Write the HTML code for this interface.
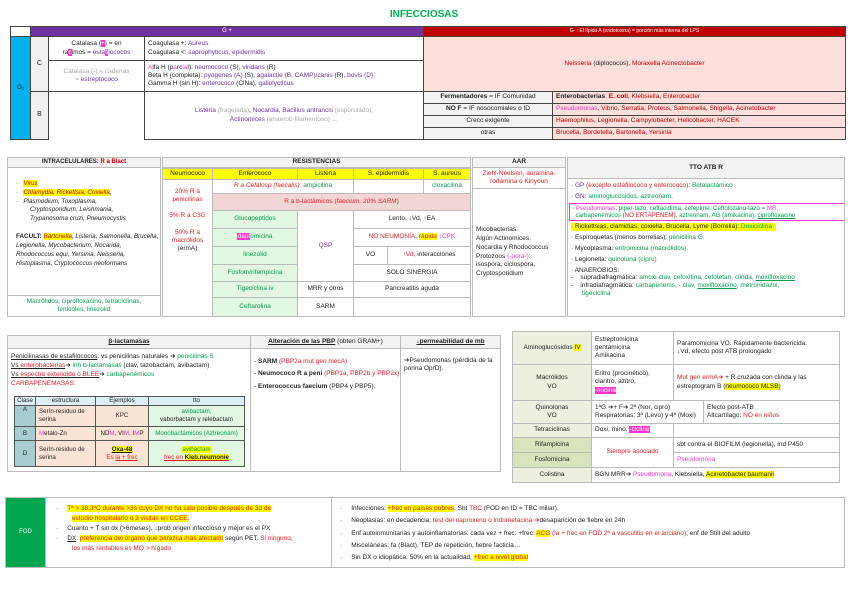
<!DOCTYPE html>
<html><head><meta charset="utf-8">
<style>
*{margin:0;padding:0;box-sizing:border-box}
body{width:848px;height:599px;background:#fff;position:relative;overflow:hidden;font-family:"Liberation Sans",sans-serif;font-size:6.5px;color:#222;line-height:1.25}
.c{position:absolute;border:1px solid #555;display:flex;align-items:center;justify-content:center;text-align:center;overflow:hidden}
.g{border-color:#bbb}
.l{justify-content:flex-start;text-align:left;padding-left:3px}
.t{align-items:flex-start;padding-top:3px}
.pu{color:#7030a0}.lg{color:#aaa}.r{color:#c00000}.rd{color:#e02020}.gr{color:#00a050}.mg{color:#ff33cc}
.hm{background:#ff33cc;color:#fff}.hy{background:#ffff00}
b{font-weight:bold}
u{text-decoration:underline}
</style></head><body>
<div style="position:absolute;left:0;width:848px;top:9px;text-align:center;color:#00b050;font-weight:bold;font-size:10px">INFECCIOSAS</div>

<!-- top table -->
<div class="c" style="left:10px;top:26px;width:21px;height:11px;border-color:#444"></div>
<div class="c" style="left:30px;top:26px;width:394px;height:11px;background:#7030a0;color:#fff;border-color:#444;font-size:6px">G +</div>
<div class="c" style="left:423px;top:26px;width:423px;height:11px;background:#c00000;color:#fff;border-color:#444;font-size:5px">G- : El lípido A (endotoxina) = porción más interna del LPS</div>
<div class="c" style="left:10px;top:36px;width:21px;height:104px;background:#00b0f0;border-color:#444">O₂</div>
<div class="c" style="left:30px;top:36px;width:19px;height:56px;background:#f0f0f0;border-color:#444;font-size:7px">C</div>
<div class="c" style="left:30px;top:91px;width:19px;height:49px;background:#f0f0f0;border-color:#444;font-size:7px">B</div>
<div class="c" style="left:48px;top:36px;width:97px;height:25px;border-color:#444"><div>Catalasa (<span class="hm">+</span>) = en<br>ra<span class="hm">c</span>imos = <span class="pu">esta<span class="hm">fi</span>lococos</span></div></div>
<div class="c" style="left:48px;top:60px;width:97px;height:32px;border-color:#444"><div class="lg">Catalasa (-) = cadenas<br>= <span class="pu">estreptococo</span></div></div>
<div class="c l" style="left:144px;top:36px;width:280px;height:25px;border-color:#444"><div>Coagulasa +: <span class="pu">Aureus</span><br>Coagulasa &lt;: <span class="pu">saprophyticus, epidermidis</span></div></div>
<div class="c l" style="left:144px;top:60px;width:280px;height:32px;border-color:#444"><div><span class="mg">A</span>lfa H (p<span class="mg">a</span>rc<span class="mg">ia</span>l): <span class="pu">neumococo</span> (S), <span class="pu">viridans</span> (R)<br>Beta H (completa): <span class="pu">pyogenes (A)</span> (S), <span class="pu">agalactie (B, CAMP)/canis</span> (R), <span class="pu">bovis (D)</span><br>Gamma H (sin H): <span class="pu">enterococo</span> (ClNa), <span class="pu">gallolycticus</span></div></div>
<div class="c" style="left:144px;top:91px;width:280px;height:49px;border-color:#444"><div><span class="pu">Listeria</span> <span class="lg">(fragelada)</span>, <span class="pu">Nocardia, Bacillus antrancis</span> <span class="lg">(esporulado),</span><br><span class="pu">Actinomices</span> <span class="lg">(anaerob filamentoso) …</span></div></div>
<div class="c" style="left:423px;top:36px;width:423px;height:56px;background:#fde0dc;border-color:#444"><span class="r">Neisseria <span style="color:#222">(diplococos)</span>, Moraxella Acinectobacter</span></div>
<div class="c" style="left:423px;top:91px;width:130px;height:13px;background:#f2f2f2;border-color:#444"><span><b>Fermentadores</b> = IF Comunidad</span></div>
<div class="c" style="left:423px;top:103px;width:130px;height:13px;background:#f2f2f2;border-color:#444"><span><b>NO F</b> = IF nosocomiales o ID</span></div>
<div class="c" style="left:423px;top:115px;width:130px;height:13px;background:#f2f2f2;border-color:#444">Crecc exigente</div>
<div class="c" style="left:423px;top:127px;width:130px;height:13px;background:#f2f2f2;border-color:#444">otras</div>
<div class="c l" style="left:552px;top:91px;width:294px;height:13px;background:#fde0dc;border-color:#444"><span><b>Enterobacterias</b>: <b class="r">E. coli</b>, <span class="r">Klebsiella, Enterobacter</span></span></div>
<div class="c l" style="left:552px;top:103px;width:294px;height:13px;background:#fde0dc;border-color:#444"><span class="r"><span class="mg">Pseudomonas</span>, Vibrio, Serratia, Proteus, Salmonella, Shigella, Acinetobacter</span></div>
<div class="c l" style="left:552px;top:115px;width:294px;height:13px;background:#fde0dc;border-color:#444"><span class="r">Haemophilus, Legionella, Campylobacter, Helicobacter, HACEK</span></div>
<div class="c l" style="left:552px;top:127px;width:294px;height:13px;background:#fde0dc;border-color:#444"><span class="r">Brucella, Bordetella, Bartonella, Yersinia</span></div>

<!-- intracelulares -->
<div class="c g" style="left:7px;top:157px;width:154px;height:11px;background:#f2f2f2;font-size:6px"><b>INTRACELULARES: <span class="r">R a Blact</span></b></div>
<div class="c g l t" style="left:7px;top:167px;width:154px;height:129px;font-style:italic;font-size:6.3px;padding-top:12px;padding-left:8px;line-height:1.4"><div>
<div>· &nbsp;&nbsp;<span class="hy r">Virus</span></div>
<div>· &nbsp;&nbsp;<span class="hy r">Chlamydia, Rickettsia, Coxiella</span>,</div>
<div>· &nbsp;&nbsp;Plasmodium, Toxoplasma,</div>
<div style="padding-left:14px">Cryptosporidium, Leishmania,<br>Trypanosoma cruzi, Pneumocystis</div>
<div style="margin-top:9px"><b style="font-style:normal">FACULT:</b> <span class="hy r">Bartonella</span>, Listeria, Salmonella, Brucella, Legionella, Mycobacterium, Nocarida, Rhodococcus equi, Yersinia, Neisseria, Histoplasma, Cryptococcus neoformans</div></div></div>
<div class="c g gr" style="left:7px;top:295px;width:154px;height:22px"><div>Macrólidos, ciprofloxacino, tetraciclinas,<br>fenicoles, linezolid</div></div>

<!-- resistencias -->
<div class="c g" style="left:162px;top:157px;width:309px;height:11px;background:#f2f2f2"><b>RESISTENCIAS</b></div>
<div class="c g hy" style="left:162px;top:168px;width:51px;height:12px">Neumococo</div>
<div class="c g hy" style="left:212px;top:168px;width:86px;height:12px">Enterococo</div>
<div class="c g hy" style="left:297px;top:168px;width:57px;height:12px">Listeria</div>
<div class="c g hy" style="left:353px;top:168px;width:71px;height:12px">S. epidermidis</div>
<div class="c g hy" style="left:423px;top:168px;width:48px;height:12px">S. aureus</div>
<div class="c g t" style="left:162px;top:179px;width:51px;height:138px;padding-top:8px"><div><span class="rd">20% R a penicilinas</span><br><br><span class="rd">5% R a C3G</span><br><br><span class="rd">50% R a macrólidos</span><br>(ermA)</div></div>
<div class="c g" style="left:212px;top:179px;width:142px;height:15px"><span><i class="rd">R a Cefalosp (faecalis):</i> <span class="gr">ampicilina</span></span></div>
<div class="c g" style="left:353px;top:179px;width:71px;height:15px"></div>
<div class="c g gr" style="left:423px;top:179px;width:48px;height:15px">cloxacilina</div>
<div class="c g" style="left:212px;top:193px;width:259px;height:18px;background:#f2d6d6"><span class="rd">R a b-lactámicos (<i>faecium, 20% SARM</i>)</span></div>
<div class="c g gr" style="left:212px;top:210px;width:86px;height:19px;background:#e2f7e2">Glucopeptidos</div>
<div class="c g gr" style="left:212px;top:228px;width:86px;height:19px;background:#e2f7e2"><span><span class="hm">dapt</span>omicina</span></div>
<div class="c g gr" style="left:212px;top:246px;width:86px;height:19px;background:#e2f7e2">linezolid</div>
<div class="c g gr" style="left:212px;top:264px;width:86px;height:18px;background:#e2f7e2">Fosfom/rifampicina</div>
<div class="c g gr" style="left:212px;top:281px;width:86px;height:17px;background:#e2f7e2">Tigeciclina iv</div>
<div class="c g gr" style="left:212px;top:297px;width:86px;height:20px;background:#e2f7e2">Ceftarolina</div>
<div class="c g pu" style="left:297px;top:210px;width:57px;height:72px">QSP</div>
<div class="c g" style="left:297px;top:281px;width:57px;height:17px">MRR y otros</div>
<div class="c g" style="left:297px;top:297px;width:57px;height:20px">SARM</div>
<div class="c g" style="left:353px;top:210px;width:118px;height:19px">Lento, ↓Vd, ↑EA</div>
<div class="c g" style="left:353px;top:228px;width:118px;height:19px"><span><span class="rd">NO NEUMONÍA,</span> <span class="hy rd">rápida</span> <span class="mg">↑CPK</span></span></div>
<div class="c g" style="left:353px;top:246px;width:35px;height:19px">VO</div>
<div class="c g" style="left:387px;top:246px;width:84px;height:19px"><span><span class="rd">↑Vd,</span> interacciones</span></div>
<div class="c g" style="left:353px;top:264px;width:118px;height:18px">SOLO SINERGIA</div>
<div class="c g" style="left:353px;top:281px;width:118px;height:17px">Pancreatitis aguda</div>
<div class="c g" style="left:353px;top:297px;width:118px;height:20px"></div>

<!-- AAR -->
<div class="c g" style="left:472px;top:157px;width:94px;height:11px;background:#f2f2f2"><b>AAR</b></div>
<div class="c g rd" style="left:472px;top:167px;width:94px;height:22px"><div>Ziehl-Neelsen, auramina-<br>rodamina o Kinyoun</div></div>
<div class="c g l" style="left:472px;top:188px;width:94px;height:129px"><div style="line-height:1.35">Micobacterias:<br>Algún Actinomices,<br>Nocardia y Rhodococcus<br>Protozoos <span class="mg">(-pora-)</span>:<br>isospora, ciclospora,<br>Cryptosporidium</div></div>

<!-- TTO -->
<div class="c g" style="left:567px;top:157px;width:278px;height:22px;background:#f2f2f2"><b>TTO ATB R</b></div>
<div class="c g l t" style="left:567px;top:178px;width:278px;height:139px;padding-top:3px;line-height:1.2"><div style="width:100%">
<div style="margin-bottom:3px">· <span class="pu">GP</span> <span class="rd">(excepto estafilococo y enterococo)</span>: <span class="gr">Betalactámico</span></div>
<div style="margin-bottom:2px">· <span class="pu">GN</span>: <span class="gr">aminoglucósidos, aztreonam.</span></div>
<div style="border:1px solid #ff33cc;margin:0 0 2px -2px;padding:1px 2px;width:276px;white-space:nowrap;font-size:6.2px">· <span class="mg">Pseudomonas</span>: <span class="gr">piper-tazo, ceftacidima, cefepime, Ceftolozano-tazo =</span> <span class="mg">MR,</span><br>&nbsp;&nbsp;<span class="gr">carbapenémicos</span> <span class="rd">(NO ERTAPENEM)</span>, <span class="gr">aztreonam, AG (amikacina), <u>ciprofloxacino</u></span></div>
<div style="margin-bottom:3px"><span class="hy" style="white-space:nowrap;display:inline-block;padding-right:4px">· Rickettsias, clamidias, coxiella, Brucella, Lyme (Borrelia): <span class="gr">Doxiciclina</span></span></div>
<div style="margin-bottom:3px">· Espiroquetas (menos borrelias): <span class="gr">penicilina G.</span></div>
<div style="margin-bottom:3px">· Mycoplasma: <span class="gr">eritromicina (macrólidos).</span></div>
<div style="margin-bottom:3px">· Legionella: <span class="gr">quinolona (cipro)</span></div>
<div>· ANAEROBIOS:</div>
<div style="white-space:nowrap">- &nbsp;&nbsp;&nbsp;supradiafragmática: <span class="gr">amoxi-clav, cefoxitina, cefotetan, clinda, <u>moxifloxacino</u></span></div>
<div>- &nbsp;&nbsp;&nbsp;infradiafragmática: <span class="gr">carbapenems, - clav, <u>moxifloxacino</u>, metronidazol,</span><br><span class="gr" style="padding-left:11px">tigeciclina</span></div>
</div></div>

<!-- beta-lactamasas -->
<div class="c g" style="left:7px;top:335px;width:244px;height:14px;background:#f2f2f2"><b><u>β-lactamasas</u></b></div>
<div class="c g l t" style="left:7px;top:348px;width:244px;height:124px;padding-top:3px;line-height:1.4"><div>
<div><u>Penicilinasas de estafilococos</u>: vs penicilinas naturales ➔ <span class="gr">penicilinas S</span></div>
<div><u>Vs <span class="rd">enterobacterias</span></u>➔ <span class="gr">inh b-lactamasas</span> (clav, tazobactam, avibactam)</div>
<div><u>Vs <span class="rd">espectro extendido o BLEE</span></u>➔ <span class="gr">carbapenémicos</span></div>
<div class="rd">CARBAPENEMASAS:</div></div></div>
<table style="position:absolute;left:14px;top:396px;width:231px;border-collapse:collapse;font-size:6.2px">
<tr style="background:#dbeef4;height:9px"><td style="border:1px solid #555;text-align:center;width:21px">Clase</td><td style="border:1px solid #555;text-align:center;width:60px">estructura</td><td style="border:1px solid #555;text-align:center;width:53px">Ejemplos</td><td style="border:1px solid #555;text-align:center">tto</td></tr>
<tr style="height:21px"><td style="border:1px solid #555;background:#a8cdd1;text-align:center;vertical-align:top">A</td><td style="border:1px solid #555;background:#fbe4d5;padding-left:3px">Serín-residuo de serina</td><td style="border:1px solid #555;background:#fbe4d5;text-align:center">KPC</td><td style="border:1px solid #555;background:#e2f7e2;text-align:center"><span class="gr">avibactam,</span><br>vaborbactam y relebactam</td></tr>
<tr style="height:14px"><td style="border:1px solid #555;background:#a8cdd1;text-align:center">B</td><td style="border:1px solid #555;background:#fbe4d5;padding-left:3px"><span class="mg">M</span>etalo-Zn</td><td style="border:1px solid #555;background:#fbe4d5;text-align:center">ND<span class="mg">M</span>, VI<span class="mg">M</span>, I<span class="mg">M</span>P</td><td style="border:1px solid #555;background:#e2f7e2;text-align:center" class="gr">Monobactámicos (Aztreonam)</td></tr>
<tr style="height:26px"><td style="border:1px solid #555;background:#a8cdd1;text-align:center">D</td><td style="border:1px solid #555;background:#fbe4d5;padding-left:3px">Serín-residuo de serina</td><td style="border:1px solid #555;background:#fbe4d5;text-align:center"><b class="hy"><u>Oxa-48</u></b><br><span class="rd">Es <u>la + frec</u></span></td><td style="border:1px solid #555;background:#e2f7e2;text-align:center"><span class="hy gr">avibactam</span><br><span class="rd"><u>frec en <b class="hy" style="color:#222">Kleb.neumonie</b></u></span></td></tr>
</table>
<div class="c g" style="left:250px;top:335px;width:151px;height:14px;background:#f2f2f2"><span><b><u>Alteración de las PBP</u></b> (obten GRAM+)</span></div>
<div class="c g l t" style="left:250px;top:348px;width:151px;height:124px;padding-top:7px;line-height:1.9"><div>
<div>- <b>SARM</b> <span class="rd">(PBP2a mut gen mecA)</span></div>
<div>- <b>Neumococo R a peni</b> <span class="rd">(PBP1a, PBP2b y PBP2x)</span></div>
<div>- <b>Enterococcus faecium</b> (PBP4 y PBP5).</div></div></div>
<div class="c g" style="left:400px;top:335px;width:101px;height:14px;background:#f2f2f2"><b><u>↓permeabilidad de mb</u></b></div>
<div class="c g l t" style="left:400px;top:348px;width:101px;height:124px;padding-top:8px"><div>➔Pseudomonas (pérdida de la porina OprD).</div></div>

<!-- right drugs table -->
<div class="c g" style="left:512px;top:331px;width:80px;height:34px;background:#ebf1de"><span>Aminoglucósidos <span class="hy">IV</span></span></div>
<div class="c g l" style="left:591px;top:331px;width:83px;height:34px"><div>Estreptomicina<br>gentamicina<br>Amikacina</div></div>
<div class="c g l" style="left:673px;top:331px;width:167px;height:34px"><div>Paramomicina VO. Rápidamente bactericida.<br>↓Vd, efecto post ATB prolongado</div></div>
<div class="c g" style="left:512px;top:364px;width:80px;height:37px;background:#ebf1de"><div>Macrólidos<br>VO</div></div>
<div class="c g l" style="left:591px;top:364px;width:83px;height:37px"><div>Eritro (procinético),<br>claritro, azitro,<br><span class="hm">-micina</span></div></div>
<div class="c g l" style="left:673px;top:364px;width:167px;height:37px"><div><span class="rd">Mut gen ermA➔</span> + R cruzada con clinda y las estreptogram B (<span class="hy">neumococo MLSB</span>)</div></div>
<div class="c g" style="left:512px;top:400px;width:80px;height:24px;background:#ebf1de"><div>Quinolonas<br>VO</div></div>
<div class="c g l" style="left:591px;top:400px;width:113px;height:24px"><div>1ªG ➔+ F➔ 2ª (Nor, cipro)<br>Respiratorias: 3ª (Levo) y 4ª (Moxi)</div></div>
<div class="c g l" style="left:703px;top:400px;width:137px;height:24px"><div>Efecto post-ATB<br>Altcartílago: <span class="rd">NO en niños</span></div></div>
<div class="c g" style="left:512px;top:423px;width:80px;height:15px;background:#ebf1de">Tetraciclinas</div>
<div class="c g l" style="left:591px;top:423px;width:83px;height:15px"><span>Doxi, mino, <span class="hm">-cicline</span></span></div>
<div class="c g" style="left:673px;top:423px;width:167px;height:15px"></div>
<div class="c g" style="left:512px;top:437px;width:80px;height:16px;background:#d8e4bc">Rifampicina</div>
<div class="c g" style="left:512px;top:452px;width:80px;height:16px;background:#d8e4bc">Fosfomicina</div>
<div class="c g rd" style="left:591px;top:437px;width:83px;height:31px">Siempre asociado</div>
<div class="c g l" style="left:673px;top:437px;width:167px;height:16px">sbt contra el BIOFILM (legionella), ind P450</div>
<div class="c g l mg" style="left:673px;top:452px;width:167px;height:16px">Pseudomona</div>
<div class="c g" style="left:512px;top:467px;width:80px;height:16px;background:#ebf1de">Colistina</div>
<div class="c g l" style="left:591px;top:467px;width:249px;height:16px"><span>BGN MRR➔ <span class="mg">Pseudomona</span>, Klebsiella, <span class="hy">Acinetobacter baumanii</span></span></div>

<!-- FOD -->
<div class="c g" style="left:5px;top:497px;width:41px;height:71px;background:#00a550;color:#fff;font-size:6px">FOD</div>
<div class="c g l t" style="left:45px;top:497px;width:287px;height:71px;padding:6px 0 0 10px;line-height:1.55"><div>
<div>· &nbsp;&nbsp;&nbsp;&nbsp;<span class="hy rd">Tª &gt; 38,3ºC durante &gt;3s cuyo DX no ha sido posible después de 3d de</span></div>
<div style="padding-left:16px"><span class="hy rd">estudio hospitalario o 3 visitas en CCEE</span>.</div>
<div>· &nbsp;&nbsp;&nbsp;&nbsp;Cuanto + T sin dx (&gt;6meses), ↓prob origen infeccioso y mejor es el PX</div>
<div>· &nbsp;&nbsp;&nbsp;&nbsp;<u>DX</u>: <span class="hy rd">preferencia del órgano que parezca más afectado</span> según PET. <span class="rd">Si ninguno,</span></div>
<div style="padding-left:16px" class="rd">los más rentables es MO &gt; hígado</div></div></div>
<div class="c g l t" style="left:331px;top:497px;width:514px;height:71px;padding:5px 0 0 8px;line-height:1.9"><div>
<div>· &nbsp;&nbsp;&nbsp;&nbsp;Infecciones: <span class="hy rd">+frec en países pobres</span>. Sbt <span class="rd">TBC</span> (FOD en ID = TBC miliar).</div>
<div>· &nbsp;&nbsp;&nbsp;&nbsp;Neoplasias: en decadencia: <span class="rd">test del naproxeno o indometacina ➔</span>desaparición de fiebre en 24h</div>
<div>· &nbsp;&nbsp;&nbsp;&nbsp;Enf autoinmunitarias y autoinflamatorias: cada vez + frec: +frec: <span class="hy rd">ACG</span> <span class="rd">(la + frec en FOD 2ª a vasculitis en el anciano)</span>; enf de Still del adulto</div>
<div>· &nbsp;&nbsp;&nbsp;&nbsp;Misceláneas: fa (Blact), TEP de repetición, fiebre facticia…</div>
<div>· &nbsp;&nbsp;&nbsp;&nbsp;Sin DX o idiopática: 50% en la actualidad, <span class="hy rd">+frec a nivel global</span></div></div></div>
</body></html>
